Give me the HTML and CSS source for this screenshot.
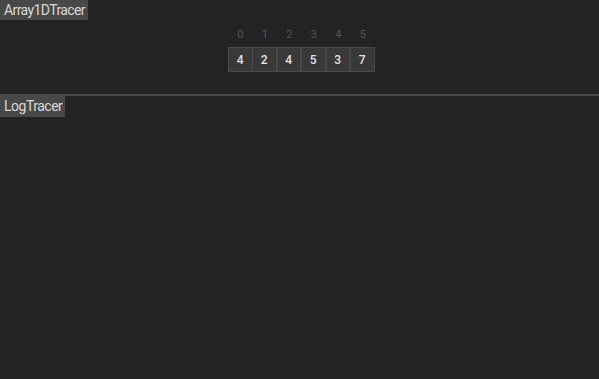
FILE: index.html
```html
<!DOCTYPE html>
<html>
<head>
<meta charset="utf-8">
<link rel="stylesheet" href="styles.css">
</head>
<body>
<div class="app">
  <section class="panel panel-array">
    <div class="title">Array1DTracer</div>
    <div class="array-wrap">
      <div class="array">
        <div class="col"><span class="idx">0</span><span class="cell">4</span></div>
        <div class="col"><span class="idx">1</span><span class="cell">2</span></div>
        <div class="col"><span class="idx">2</span><span class="cell">4</span></div>
        <div class="col"><span class="idx">3</span><span class="cell">5</span></div>
        <div class="col"><span class="idx">4</span><span class="cell">3</span></div>
        <div class="col"><span class="idx">5</span><span class="cell">7</span></div>
      </div>
    </div>
  </section>
  <section class="panel panel-log">
    <div class="title">LogTracer</div>
  </section>
</div>
</body>
</html>
```
FILE: styles.css
```css
html, body {
  margin: 0;
  padding: 0;
  height: 100%;
  background: #232323;
  font-family: Roboto, "Noto Sans", sans-serif;
}
.app {
  display: flex;
  flex-direction: column;
  height: 379px;
}
.panel {
  position: relative;
  display: flex;
  flex-direction: column;
}
.panel-array {
  height: 96px;
  border-bottom: 2px solid #484848;
  box-sizing: border-box;
}
.panel-log {
  flex: 1;
}
.title {
  position: absolute;
  left: 0;
  top: 0;
  background: #484848;
  color: #d8d8d8;
  font-size: 14px;
  letter-spacing: -0.6px;
  line-height: 20px;
  padding: 0 3px 0 4px;
}
.panel-log .title {
  line-height: 21px;
  letter-spacing: -0.5px;
}
.array-wrap {
  flex: 1;
  display: flex;
  justify-content: center;
  align-items: center;
  padding-left: 4px;
  padding-top: 6px;
}
.array {
  display: flex;
}
.col {
  display: flex;
  flex-direction: column;
  align-items: center;
  width: 24.5px;
}
.idx {
  color: #555555;
  font-size: 11px;
  line-height: 13px;
  margin-bottom: 6px;
}
.cell {
  box-sizing: border-box;
  width: 100%;
  height: 25px;
  display: flex;
  align-items: center;
  justify-content: center;
  background: #393939;
  border: 1px solid #4a4a4a;
  margin-left: -1px;
  color: #e4e4e4;
  font-size: 12px;
  font-weight: 500;
}
.col:first-child .cell {
  margin-left: 0;
}
```
